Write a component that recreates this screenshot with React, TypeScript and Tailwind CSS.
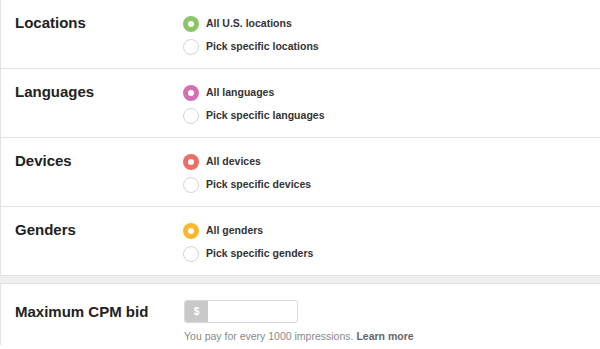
const sections = [
  { title: 'Locations', color: 'bg-[#8cc567]', options: ['All U.S. locations', 'Pick specific locations'] },
  { title: 'Languages', color: 'bg-[#d471b4]', options: ['All languages', 'Pick specific languages'] },
  { title: 'Devices', color: 'bg-[#ec6f66]', options: ['All devices', 'Pick specific devices'] },
  { title: 'Genders', color: 'bg-[#fbb82a]', options: ['All genders', 'Pick specific genders'] },
];

const Radio = ({ checked, color }: { checked: boolean; color: string }) =>
  checked ? (
    <span className={`w-[16px] h-[16px] rounded-full ${color} flex items-center justify-center`}>
      <span className="w-[6px] h-[6px] rounded-full bg-white"></span>
    </span>
  ) : (
    <span className="w-[16px] h-[16px] rounded-full border border-[#d4d4d4] bg-white"></span>
  );

const App = () => {
  return (
    <div className="w-[600px] h-[349px] overflow-hidden bg-white text-[#222]" style={{ fontFamily: '"Liberation Sans", Arial, sans-serif' }}>
      {sections.map((s) => (
        <section key={s.title} className="flex border-b border-l border-[#e2e2e2] pt-[11px] pb-[10px] pl-[14px]">
          <h2 className="w-[168px] text-[15px] font-bold leading-[23px]">{s.title}</h2>
          <div className="flex flex-col mt-[1px]">
            {s.options.map((o, i) => (
              <label key={o} className="flex items-center h-[23px] gap-[7px]">
                <Radio checked={i === 0} color={s.color} />
                <span className="text-[10.5px] font-bold text-[#333]">{o}</span>
              </label>
            ))}
          </div>
        </section>
      ))}

      <div className="h-[8px] bg-[#efefef] border-b border-[#e2e2e2]"></div>

      <section className="flex border-l border-[#e2e2e2] pt-[16px] pl-[14px]">
        <h2 className="w-[169px] text-[15px] font-bold leading-[22px] pt-[1px]">Maximum CPM bid</h2>
        <div className="flex flex-col">
          <div className="flex w-[114px] h-[23px] rounded-[3px] border border-[#d8d8d8] overflow-hidden">
            <span className="w-[23px] shrink-0 bg-[#c9c9c9] text-white text-[10px] font-bold flex items-center justify-center">$</span>
            <input className="w-0 min-w-0 flex-1 outline-none" />
          </div>
          <p className="mt-[6px] text-[10.5px] text-[#8a8a8a]">
            You pay for every 1000 impressions. <span className="font-bold text-[#666]">Learn more</span>
          </p>
        </div>
      </section>
    </div>
  );
};

export default App;
